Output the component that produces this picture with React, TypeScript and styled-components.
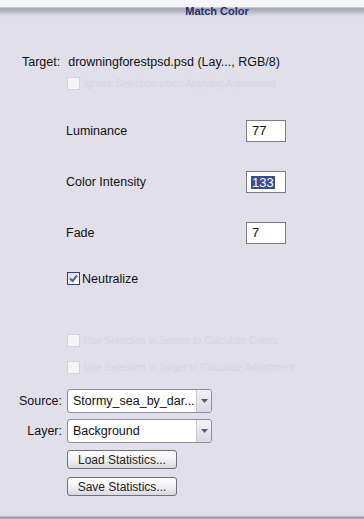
import React from "react";
import styled, { createGlobalStyle } from "styled-components";

const Global = createGlobalStyle`
  html, body { margin: 0; padding: 0; background: #e0dfea; }
  body { font-family: "Liberation Sans", Arial, sans-serif; }
`;

const Window = styled.div`
  width: 364px;
  height: 519px;
  background: #e0dfea;
  display: flex;
  flex-direction: column;
  overflow: hidden;
  color: #111;
  font-size: 12px;
  line-height: 16px;
`;

const TitleBar = styled.div`
  height: 22px;
  flex: none;
  background: linear-gradient(
    to bottom,
    #f6f6fa 0px,
    #f3f3f7 7px,
    #a5a5b7 8px,
    #b4b4c4 11px,
    #cfcfdb 14px,
    #e0dfea 17px
  );
  display: flex;
  justify-content: center;
  padding-left: 70px;
`;

const Title = styled.div`
  font-weight: bold;
  font-size: 11px;
  line-height: 22px;
  color: #2b2f6c;
`;

const Body = styled.div`
  flex: 1;
  display: flex;
  flex-direction: column;
`;

const TargetRow = styled.div`
  margin-top: 32px;
  padding-left: 22px;
  display: flex;
  gap: 8px;
  white-space: nowrap;
  font-size: 12.5px;
`;

const CheckRow = styled.label<{ $top: number; $disabled?: boolean }>`
  margin-top: ${(p) => p.$top}px;
  padding-left: 67px;
  height: 13px;
  display: flex;
  align-items: center;
  gap: ${(p) => (p.$disabled ? "4px" : "2px")};
  white-space: nowrap;
  font-size: ${(p) => (p.$disabled ? "10px" : "12.5px")};
  color: ${(p) => (p.$disabled ? "#d6d5e1" : "#111")};
`;

const Box = styled.span<{ $disabled?: boolean }>`
  width: 11px;
  height: 11px;
  flex: none;
  border: 1px solid ${(p) => (p.$disabled ? "#d3d3dd" : "#2f4377")};
  background: ${(p) =>
    p.$disabled ? "#f5f5f8" : "linear-gradient(135deg, #dcdcdc, #ffffff)"};
  display: flex;
  align-items: center;
  justify-content: center;
`;

const FieldRow = styled.div<{ $top: number }>`
  margin-top: ${(p) => p.$top}px;
  padding-left: 66px;
  height: 22px;
  display: flex;
  align-items: center;
`;

const FieldLabel = styled.span`
  width: 180px;
  font-size: 12.5px;
`;

const NumberBox = styled.div`
  width: 40px;
  height: 22px;
  box-sizing: border-box;
  border: 1px solid #7b7b86;
  background: #ffffff;
  display: flex;
  align-items: center;
  padding-left: 5px;
  font-size: 13px;
`;

const Selected = styled.span`
  background: #3a4e8c;
  color: #fff;
  line-height: 13px;
  padding: 0 1px;
  margin-left: -1px;
`;

const PickRow = styled.div<{ $top: number }>`
  margin-top: ${(p) => p.$top}px;
  display: flex;
  align-items: center;
  height: 24px;
`;

const PickLabel = styled.span`
  width: 62px;
  text-align: right;
  padding-right: 5px;
  box-sizing: content-box;
  font-size: 12.5px;
`;

const Select = styled.div`
  width: 145px;
  height: 24px;
  box-sizing: border-box;
  border: 1px solid #8c8c9c;
  border-radius: 3px;
  background: #fff;
  display: flex;
  align-items: stretch;
  overflow: hidden;
`;

const SelectText = styled.span`
  flex: 1;
  padding-left: 5px;
  display: flex;
  align-items: center;
  font-size: 12.5px;
  white-space: nowrap;
`;

const Arrow = styled.span`
  width: 14px;
  border-left: 1px solid #c9c9d3;
  background: linear-gradient(to bottom, #f2f2f6, #d9d9e2);
  display: flex;
  align-items: center;
  justify-content: center;
`;

const ButtonRow = styled.div<{ $top: number }>`
  margin-top: ${(p) => p.$top}px;
  padding-left: 67px;
  display: flex;
`;

const Button = styled.button`
  width: 110px;
  height: 19px;
  border: 1px solid #70707e;
  border-radius: 3px;
  background: linear-gradient(to bottom, #ffffff 0%, #f1f1f4 50%, #d8d8df 100%);
  font-family: "Liberation Sans", Arial, sans-serif;
  font-size: 12px;
  color: #222;
  padding: 0;
  display: flex;
  align-items: center;
  justify-content: center;
`;

const BottomEdge = styled.div`
  height: 5px;
  flex: none;
  background: linear-gradient(to bottom, #e0dfea 0px, #d9d9e3 2px, #9b9bab 3px, #a9a9b7 5px);
`;

const Check = () => (
  <svg width="9" height="9" viewBox="0 0 9 9">
    <path d="M1 4.5 L3.5 7 L8 1.5" fill="none" stroke="#4661a3" strokeWidth="2" />
  </svg>
);

const Tri = () => (
  <svg width="7" height="4" viewBox="0 0 7 4">
    <path d="M0 0 H7 L3.5 4 Z" fill="#5a5a72" />
  </svg>
);

export default function App() {
  return (
    <Window>
      <Global />
      <TitleBar>
        <Title>Match Color</Title>
      </TitleBar>
      <Body>
        <TargetRow>
          <span>Target:</span>
          <span>drowningforestpsd.psd (Lay..., RGB/8)</span>
        </TargetRow>
        <CheckRow $top={7} $disabled>
          <Box $disabled />
          Ignore Selection when Applying Adjustment
        </CheckRow>
        <FieldRow $top={30}>
          <FieldLabel>Luminance</FieldLabel>
          <NumberBox>77</NumberBox>
        </FieldRow>
        <FieldRow $top={29}>
          <FieldLabel>Color Intensity</FieldLabel>
          <NumberBox>
            <Selected>133</Selected>
          </NumberBox>
        </FieldRow>
        <FieldRow $top={29}>
          <FieldLabel>Fade</FieldLabel>
          <NumberBox>7</NumberBox>
        </FieldRow>
        <CheckRow $top={28}>
          <Box>
            <Check />
          </Box>
          Neutralize
        </CheckRow>
        <CheckRow $top={49} $disabled>
          <Box $disabled />
          Use Selection in Source to Calculate Colors
        </CheckRow>
        <CheckRow $top={14} $disabled>
          <Box $disabled />
          Use Selection in Target to Calculate Adjustment
        </CheckRow>
        <PickRow $top={15}>
          <PickLabel>Source:</PickLabel>
          <Select>
            <SelectText>Stormy_sea_by_dar...</SelectText>
            <Arrow>
              <Tri />
            </Arrow>
          </Select>
        </PickRow>
        <PickRow $top={6}>
          <PickLabel>Layer:</PickLabel>
          <Select>
            <SelectText>Background</SelectText>
            <Arrow>
              <Tri />
            </Arrow>
          </Select>
        </PickRow>
        <ButtonRow $top={7}>
          <Button>Load Statistics...</Button>
        </ButtonRow>
        <ButtonRow $top={8}>
          <Button>Save Statistics...</Button>
        </ButtonRow>
      </Body>
      <BottomEdge />
    </Window>
  );
}
